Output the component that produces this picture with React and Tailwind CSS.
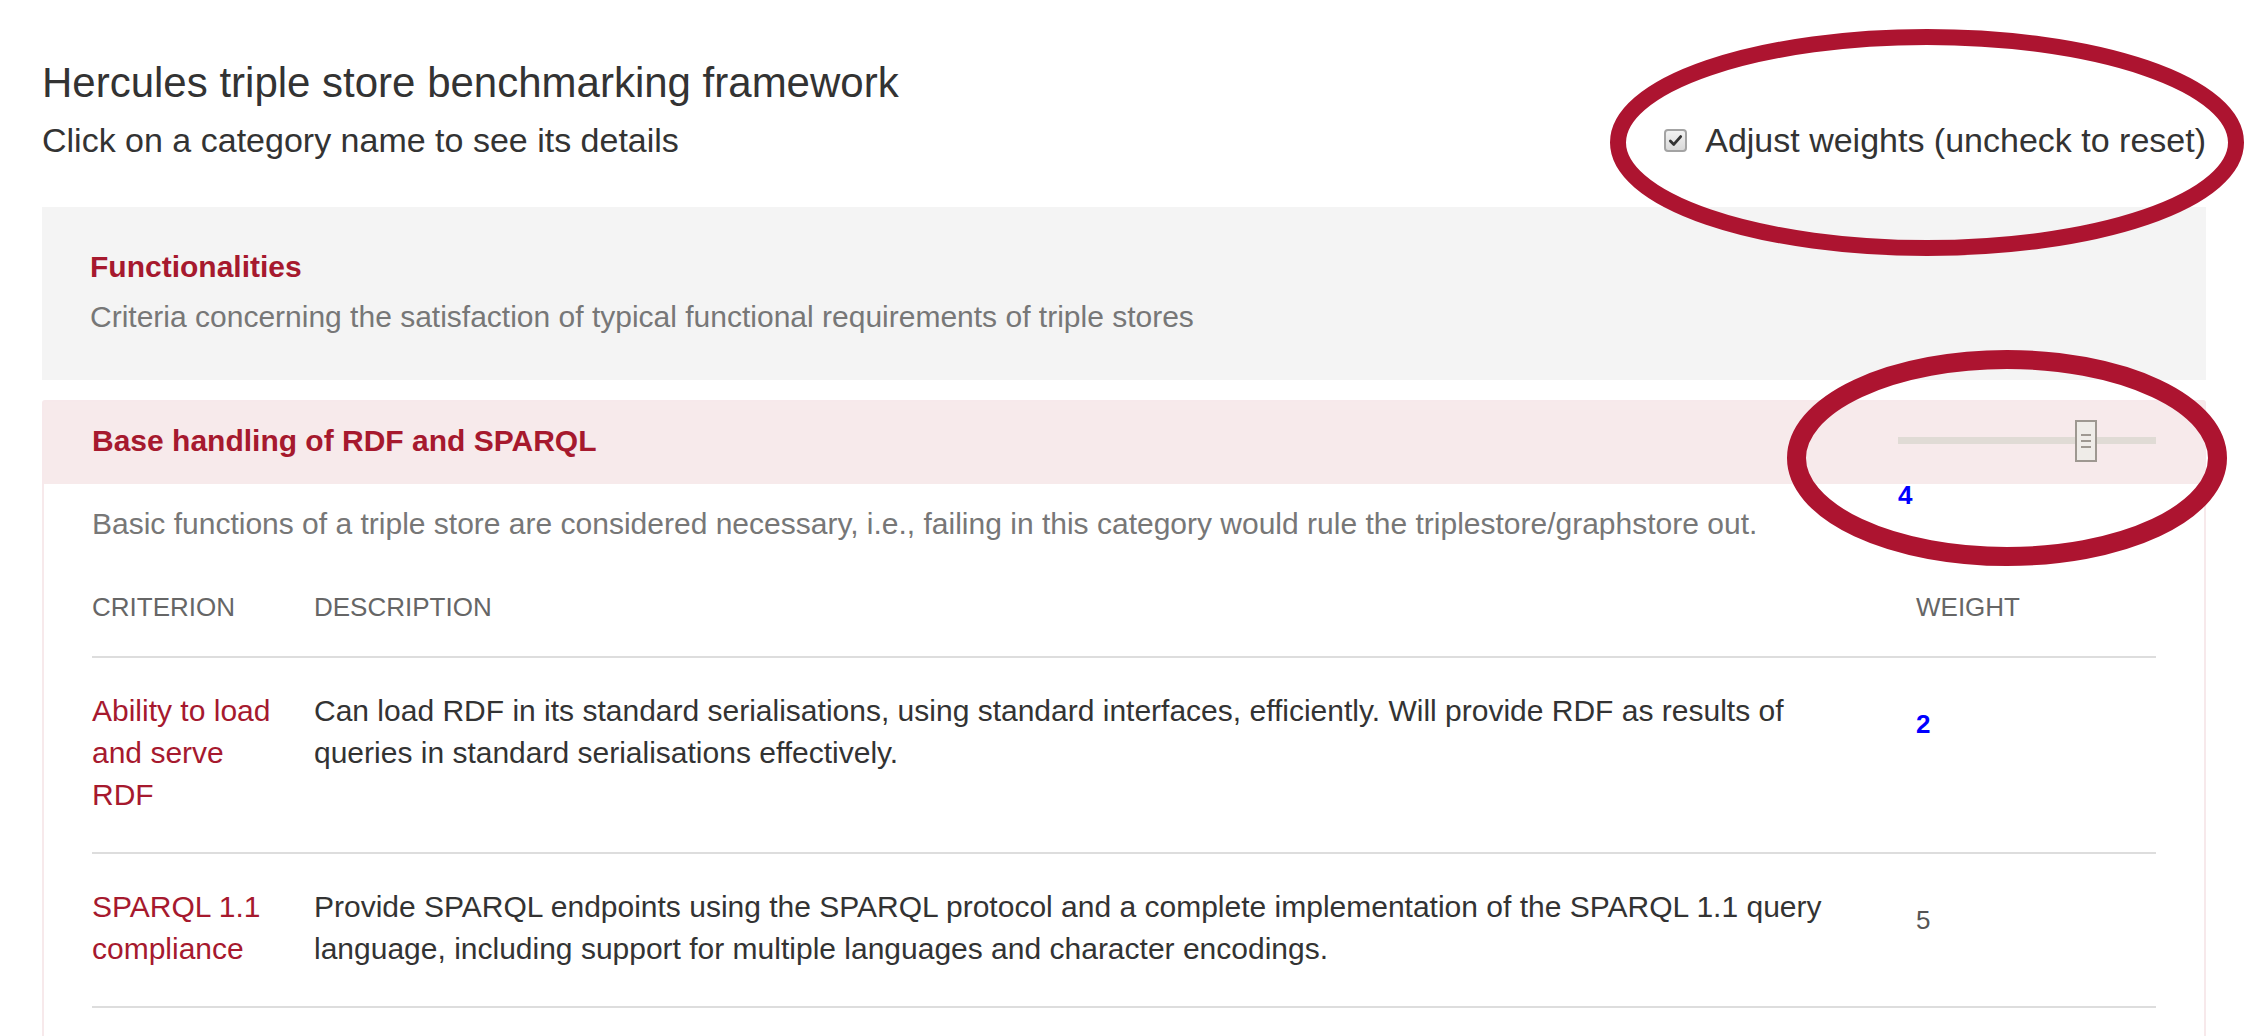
import React from 'react';

const criteria = [
  {
    name: 'Ability to load and serve RDF',
    description:
      'Can load RDF in its standard serialisations, using standard interfaces, efficiently. Will provide RDF as results of queries in standard serialisations effectively.',
    weight: 2,
    adjusted: true,
  },
  {
    name: 'SPARQL 1.1 compliance',
    description:
      'Provide SPARQL endpoints using the SPARQL protocol and a complete implementation of the SPARQL 1.1 query language, including support for multiple languages and character encodings.',
    weight: 5,
    adjusted: false,
  },
];

const Checkbox = () => (
  <span className="w-[23px] h-[23px] rounded-[4px] border-2 border-[#a3a3a3] bg-gradient-to-b from-[#f2f2f2] to-[#d9d9d9] flex items-center justify-center">
    <svg width="15" height="15" viewBox="0 0 16 16">
      <path d="M2.5 8.5 L6.2 12.2 L13.5 3.8" fill="none" stroke="#333" strokeWidth="3" strokeLinecap="round" strokeLinejoin="round" />
    </svg>
  </span>
);

const Slider = ({ value }) => (
  <div className="relative w-[258px] h-[42px] flex items-center">
    <div className="h-[7px] w-full bg-[#e0dbd5]" />
    {/* handle */}
    <div className="absolute left-[177px] top-0 w-[22px] h-[42px] border-2 border-[#9e9891] bg-[#efece8] flex flex-col items-center justify-center gap-[4px]">
      <span className="w-[10px] h-[2px] bg-[#9e9891]" />
      <span className="w-[10px] h-[2px] bg-[#9e9891]" />
      <span className="w-[10px] h-[2px] bg-[#9e9891]" />
    </div>
    <span className="absolute left-0 top-[60px] text-[26px] leading-[30px] font-bold text-[#0000ff]">{value}</span>
  </div>
);

const App = () => {
  return (
    <div className="relative min-h-screen bg-white text-[#333] font-['Liberation_Sans',Arial,sans-serif] overflow-hidden">
      <div className="pl-[42px] pr-[59px] pt-[60px]">
        {/* Header */}
        <h1 className="text-[42px] leading-[46px] font-normal">Hercules triple store benchmarking framework</h1>
        <div className="mt-[14px] flex items-center justify-between text-[34px] leading-[40px]">
          <p>Click on a category name to see its details</p>
          <label className="flex items-center gap-[18px]">
            <Checkbox />
            <span>Adjust weights (uncheck to reset)</span>
          </label>
        </div>

        {/* Category */}
        <section className="mt-[47px] bg-[#f4f4f4] pl-[48px] pt-[39px] pb-[42px]">
          <h2 className="text-[30px] leading-[42px] font-bold text-[#a6192e]">Functionalities</h2>
          <p className="mt-[8px] text-[30px] leading-[42px] text-[#777]">
            Criteria concerning the satisfaction of typical functional requirements of triple stores
          </p>
        </section>

        {/* Sub category */}
        <div className="mt-[20px] border-2 border-[#f7e9eb] rounded-t-[3px]">
          <div className="h-[82px] bg-[#f7eaeb] flex items-center justify-between px-[48px] pb-[5px]">
            <h3 className="text-[30px] leading-[42px] font-bold text-[#a6192e]">Base handling of RDF and SPARQL</h3>
            <Slider value={4} />
          </div>

          <div className="px-[48px] pt-[19px] pb-[120px]">
            <p className="text-[30px] leading-[42px] text-[#777]">
              Basic functions of a triple store are considered necessary, i.e., failing in this category would rule the triplestore/graphstore out.
            </p>

            <div className="mt-[44px] grid grid-cols-[222px_1602px_240px] border-b-2 border-[#ddd] pb-[30px] text-[26px] leading-[37px] text-[#666] uppercase">
              <div>Criterion</div>
              <div>Description</div>
              <div>Weight</div>
            </div>

            {criteria.map((c) => (
              <div key={c.name} className="grid grid-cols-[222px_1602px_240px] border-b-2 border-[#ddd] text-[30px] leading-[42px]">
                <div className="pt-[32px] pb-[36px] pr-[30px] text-[#a6192e]">{c.name}</div>
                <div className="pt-[32px] pb-[36px] pr-[56px] text-[#333]">{c.description}</div>
                <div className="pt-[44px]">
                  <span className={`text-[26px] leading-[30px] ${c.adjusted ? 'font-bold text-[#0000ff]' : 'text-[#555]'}`}>
                    {c.weight}
                  </span>
                </div>
              </div>
            ))}
          </div>
        </div>
      </div>

      {/* Annotation ellipses */}
      <svg className="absolute left-0 top-0 pointer-events-none" width="2265" height="1036" viewBox="0 0 2265 1036">
        <ellipse cx="1927" cy="142.5" rx="309" ry="105.5" fill="none" stroke="#ad1430" strokeWidth="16" />
        <ellipse cx="2007" cy="458" rx="210.5" ry="98.5" fill="none" stroke="#ad1430" strokeWidth="19" />
      </svg>
    </div>
  );
};

export default App;
